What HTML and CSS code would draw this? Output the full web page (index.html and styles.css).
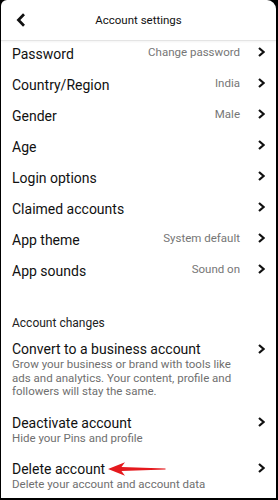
FILE: index.html
```html
<!DOCTYPE html>
<html lang="en">
<head>
<meta charset="utf-8">
<title>Account settings</title>
<link rel="stylesheet" href="styles.css">
</head>
<body>
<div class="screen">
  <header class="topbar">
    <button class="back" aria-label="Back">
      <svg width="10" height="14" viewBox="0 0 10 14"><polyline points="8,1.2 2.4,7 8,12.8" fill="none" stroke="#111" stroke-width="2.7"/></svg>
    </button>
    <h1 class="title">Account settings</h1>
    <span></span>
  </header>

  <ul class="settings-list">
    <li class="row"><span class="row-label">Password</span><span class="row-end"><span class="row-value">Change password</span><svg class="chev" width="7" height="10" viewBox="0 0 7 10"><polyline points="1,1 5.6,5 1,9" fill="none" stroke="#111" stroke-width="2.2"/></svg></span></li>
    <li class="row"><span class="row-label">Country/Region</span><span class="row-end"><span class="row-value">India</span><svg class="chev" width="7" height="10" viewBox="0 0 7 10"><polyline points="1,1 5.6,5 1,9" fill="none" stroke="#111" stroke-width="2.2"/></svg></span></li>
    <li class="row"><span class="row-label">Gender</span><span class="row-end"><span class="row-value">Male</span><svg class="chev" width="7" height="10" viewBox="0 0 7 10"><polyline points="1,1 5.6,5 1,9" fill="none" stroke="#111" stroke-width="2.2"/></svg></span></li>
    <li class="row"><span class="row-label">Age</span><span class="row-end"><svg class="chev" width="7" height="10" viewBox="0 0 7 10"><polyline points="1,1 5.6,5 1,9" fill="none" stroke="#111" stroke-width="2.2"/></svg></span></li>
    <li class="row"><span class="row-label">Login options</span><span class="row-end"><svg class="chev" width="7" height="10" viewBox="0 0 7 10"><polyline points="1,1 5.6,5 1,9" fill="none" stroke="#111" stroke-width="2.2"/></svg></span></li>
    <li class="row"><span class="row-label">Claimed accounts</span><span class="row-end"><svg class="chev" width="7" height="10" viewBox="0 0 7 10"><polyline points="1,1 5.6,5 1,9" fill="none" stroke="#111" stroke-width="2.2"/></svg></span></li>
    <li class="row"><span class="row-label">App theme</span><span class="row-end"><span class="row-value">System default</span><svg class="chev" width="7" height="10" viewBox="0 0 7 10"><polyline points="1,1 5.6,5 1,9" fill="none" stroke="#111" stroke-width="2.2"/></svg></span></li>
    <li class="row"><span class="row-label">App sounds</span><span class="row-end"><span class="row-value">Sound on</span><svg class="chev" width="7" height="10" viewBox="0 0 7 10"><polyline points="1,1 5.6,5 1,9" fill="none" stroke="#111" stroke-width="2.2"/></svg></span></li>
  </ul>

  <h2 class="section-title">Account changes</h2>
  <ul class="item-list">
    <li class="item">
      <div class="item-text">
        <div class="item-title">Convert to a business account</div>
        <div class="item-desc">Grow your business or brand with tools like ads and analytics. Your content, profile and followers will stay the same.</div>
      </div>
      <span class="item-end"><svg class="chev" width="7" height="10" viewBox="0 0 7 10"><polyline points="1,1 5.6,5 1,9" fill="none" stroke="#111" stroke-width="2.2"/></svg></span>
    </li>
    <li class="item">
      <div class="item-text">
        <div class="item-title">Deactivate account</div>
        <div class="item-desc">Hide your Pins and profile</div>
      </div>
      <span class="item-end"><svg class="chev" width="7" height="10" viewBox="0 0 7 10"><polyline points="1,1 5.6,5 1,9" fill="none" stroke="#111" stroke-width="2.2"/></svg></span>
    </li>
    <li class="item">
      <div class="item-text">
        <div class="item-title"><span class="marked">Delete account<svg class="arrow" width="58" height="14" viewBox="0 0 58 14"><path d="M0,7 L17,0.3 L13.5,5 L57.5,6.6 L57.5,7.4 L13.5,9 L17,13.7 Z" fill="#e5191d"/></svg></span></div>
        <div class="item-desc">Delete your account and account data</div>
      </div>
      <span class="item-end"><svg class="chev" width="7" height="10" viewBox="0 0 7 10"><polyline points="1,1 5.6,5 1,9" fill="none" stroke="#111" stroke-width="2.2"/></svg></span>
    </li>
  </ul>
</div>
</body>
</html>
```

FILE: styles.css
```css
* { box-sizing: border-box; }

html, body {
  margin: 0;
  padding: 0;
  background: #000;
  height: 500px;
  overflow: hidden;
}

body {
  font-family: Roboto, "Noto Sans", "Liberation Sans", sans-serif;
  color: #111;
}

.screen {
  margin: 0 2px 0 1px;
  height: 498px;
  background: #fff;
  border-radius: 6px 9px 0 0;
  overflow: hidden;
}

.topbar {
  height: 41px;
  display: grid;
  grid-template-columns: 1fr auto 1fr;
  align-items: center;
  padding-bottom: 1px;
  border-bottom: 1px solid #e4e4e4;
  box-shadow: 0 1px 2px rgba(0, 0, 0, 0.05);
  position: relative;
}

.back {
  justify-self: start;
  margin-left: 15px;
  padding: 0;
  border: 0;
  background: none;
  width: 10px;
  height: 14px;
  display: flex;
}

.title {
  margin: 0;
  font-size: 11.5px;
  font-weight: 400;
  line-height: 14px;
  color: #111;
}

.settings-list,
.item-list {
  list-style: none;
  margin: 0;
  padding: 0;
}

.row {
  height: 31px;
  display: flex;
  align-items: center;
  padding: 0 11px 6px;
}

.row-label {
  flex: 1;
  font-size: 14px;
  line-height: 18px;
  color: #111;
}

.row-end {
  display: flex;
  align-items: center;
  padding-bottom: 4px;
}

.row-value {
  font-size: 11.5px;
  line-height: 14px;
  color: #767676;
  margin-right: 18px;
}

.chev { display: block; }

.section-title {
  margin: 0;
  padding: 27px 11px 0;
  font-size: 12px;
  font-weight: 400;
  line-height: 14px;
  color: #222;
}

.item-list {
  padding-top: 10px;
  display: flex;
  flex-direction: column;
  gap: 14.5px;
}

.item {
  display: flex;
  align-items: flex-start;
  padding: 0 11px;
}

.item-text {
  flex: 1;
  padding-right: 16px;
}

.item-title {
  font-size: 14px;
  line-height: 18px;
  color: #111;
}

.item-desc {
  font-size: 11.5px;
  line-height: 13.7px;
  color: #6f6f6f;
}

.item-end {
  height: 18px;
  display: flex;
  align-items: center;
  padding-bottom: 1px;
}

.marked {
  position: relative;
  display: inline-block;
}

.arrow {
  position: absolute;
  left: calc(100% + 3px);
  top: 2px;
  display: block;
}
```
